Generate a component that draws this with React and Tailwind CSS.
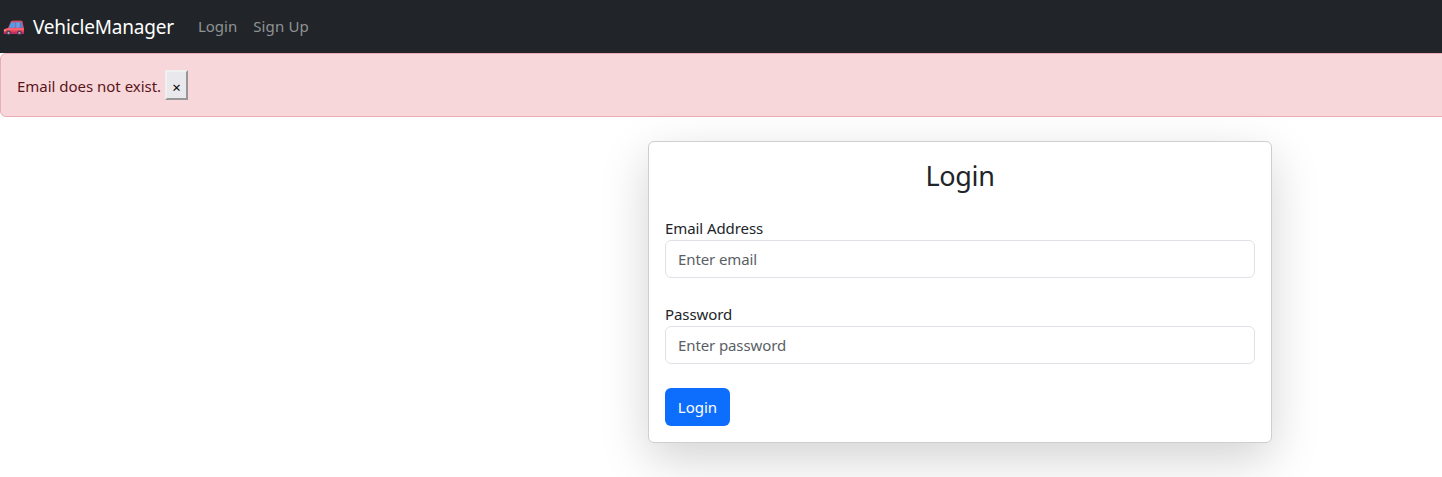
function CarIcon() {
  return (
    <svg className="mt-[3px] h-[17px] w-[22px] shrink-0" viewBox="0 0 22 17">
      <path d="M1 9.2 5.1 7.8 7.8 1.8Q8.3 .7 9.6 .7H17.8Q19.2 .7 19.6 2L21 8.2V12.9Q21 14 19.6 14H2Q.8 14 .8 13Z" fill="#e0405a" />
      <path d="M7.8 1.8Q8.3 .7 9.6 .7H17.8Q19.2 .7 19.6 2L19.8 2.8H7.4Z" fill="#c85266" />
      <path d="M8.3 2.3H12.4V7.8H5.7Z" fill="#4b9df0" />
      <path d="M13.2 2.3H16.7V7.8H13.2Z" fill="#55a6f2" />
      <path d="M17.4 2.3H18.7L19.9 7.8H17.4Z" fill="#3f8ee0" />
      <path d="M1.3 9.2 5.6 8.2H20.9V10.3H1.3Z" fill="#fb6470" />
      <path d="M.8 12H21V12.9Q21 14 19.6 14H2Q.8 14 .8 13Z" fill="#c22f5c" />
      <rect x=".9" y="9.8" width="1.7" height="1.4" fill="#f6a978" />
      <circle cx="5.6" cy="12.9" r="2.3" fill="#4a3554" />
      <circle cx="5.6" cy="12.9" r="1.1" fill="#b9a8c4" />
      <circle cx="16.4" cy="12.9" r="2.3" fill="#4a3554" />
      <circle cx="16.4" cy="12.9" r="1.1" fill="#b9a8c4" />
    </svg>
  );
}

function Field({ label, type, placeholder }) {
  return (
    <label className="mb-6 block">
      <span className="block h-6 leading-6 tracking-[-0.08px]">{label}</span>
      <input
        type={type}
        placeholder={placeholder}
        className="block h-[38px] w-full rounded-md border border-[#dee2e6] bg-white px-3 tracking-[-0.11px] placeholder:text-[#595f66] placeholder:opacity-100"
      />
    </label>
  );
}

export default function App() {
  return (
    <div className="h-[477px] overflow-hidden bg-white font-['Noto_Sans',sans-serif] text-[15px] text-[#212529]">
      <nav className="flex h-[53px] items-center bg-[#212529] pl-[3px]">
        <a href="#" className="flex items-center text-[19px] text-white">
          <CarIcon />
          <span className="ml-2 pt-0.5 tracking-[-0.2px]">VehicleManager</span>
        </a>
        <a href="#" className="ml-6 text-[#909294]">Login</a>
        <a href="#" className="ml-4 tracking-[0.15px] text-[#909294]">Sign Up</a>
      </nav>
      <div className="flex h-16 w-[1920px] items-center rounded-md border border-[#e9adb5] bg-[#f8d7da] pl-4 text-[#58151c]">
        <span className="pt-0.5 tracking-[-0.02px]">Email does not exist.</span>
        <button
          type="button"
          className="ml-1 flex h-[30px] w-[23px] items-center justify-center border-2 border-t-[#f0f0f1] border-r-[#979797] border-b-[#979797] border-l-[#f0f0f1] bg-[#e9e9ed] pt-1 text-[15px] leading-none text-black"
        >
          ×
        </button>
      </div>
      <main className="flex w-[1920px] justify-center pt-6">
        <form className="h-[302px] w-[624px] rounded-md border border-[#cfcfd0] bg-white p-4 shadow-[0_16px_48px_rgba(0,0,0,0.175)]">
          <h3 className="mb-6 h-[34px] pt-px text-center text-[27px] leading-[34px] tracking-[-0.3px]">Login</h3>
          <Field label="Email Address" type="email" placeholder="Enter email" />
          <Field label="Password" type="password" placeholder="Enter password" />
          <button type="submit" className="block h-[38px] w-[65px] rounded-md bg-[#0d6efd] text-white">
            Login
          </button>
        </form>
      </main>
    </div>
  );
}
